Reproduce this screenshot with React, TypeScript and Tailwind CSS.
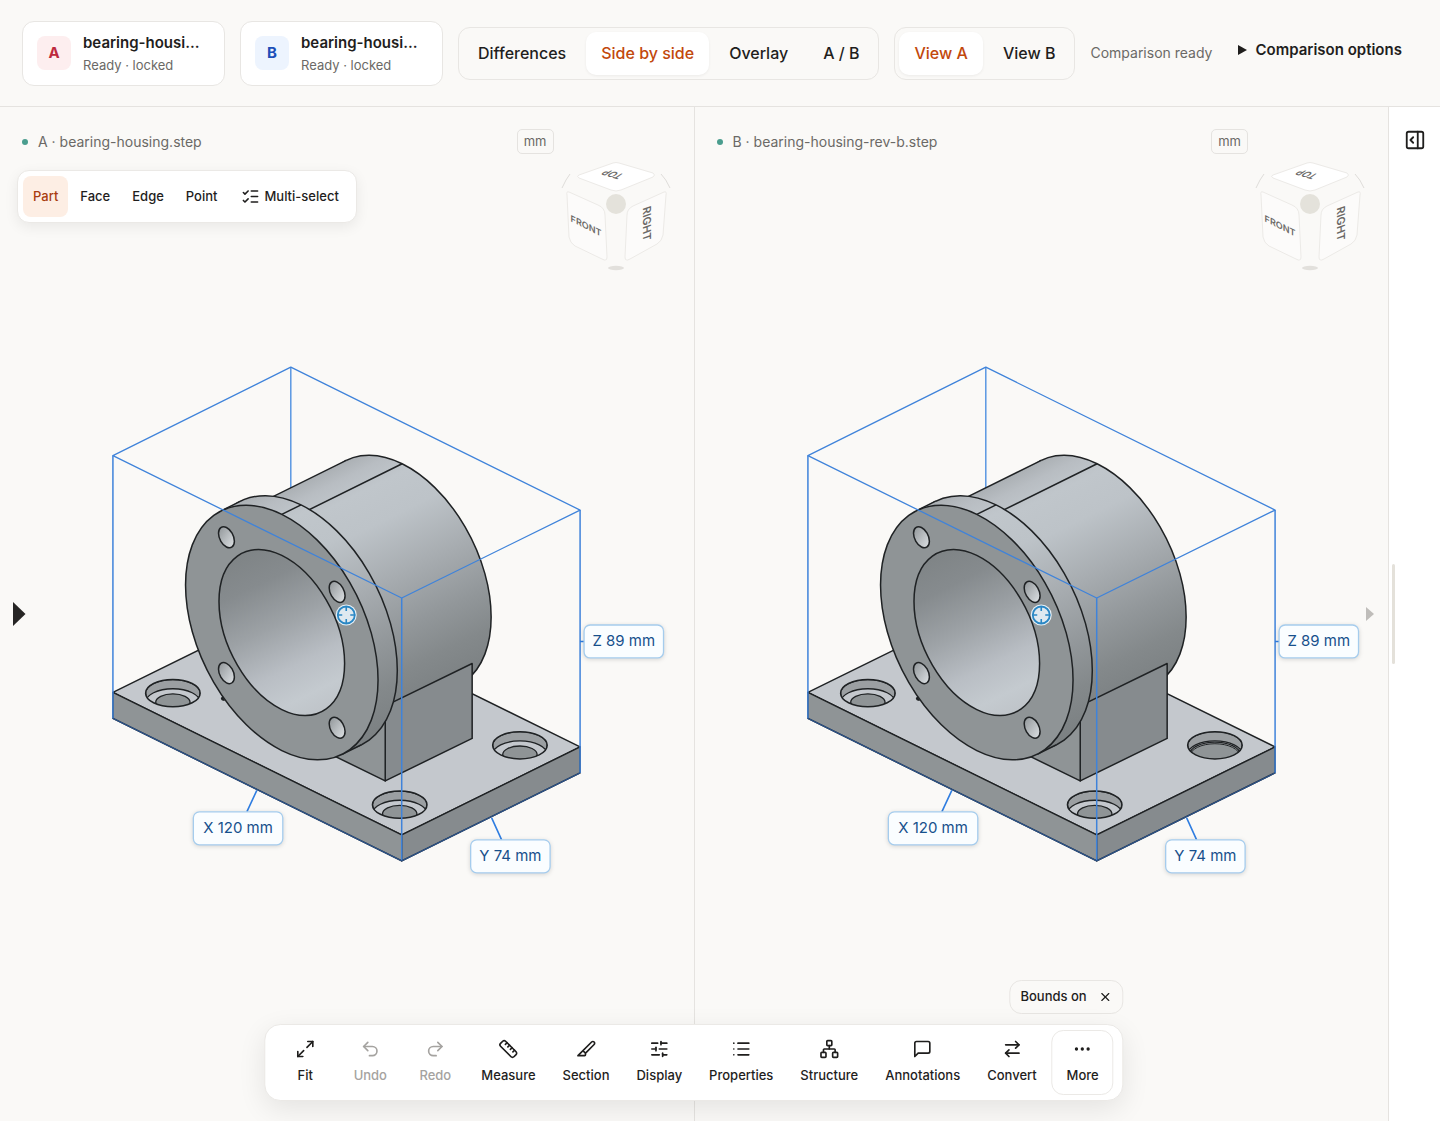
import { useState, type ReactNode } from "react";
import clsx from "clsx";
import {
  ArrowRightLeft,
  Ellipsis,
  List,
  ListChecks,
  Maximize2,
  Network,
  PanelRightOpen,
  Redo2,
  Ruler,
  Slice,
  SlidersHorizontal,
  Undo2,
  X,
} from "lucide-react";

type Side = "A" | "B";

const INK = "#1f2224";

const MODES = ["Differences", "Side by side", "Overlay", "A / B"];
const VIEWS = ["View A", "View B"];
const PICKS = ["Part", "Face", "Edge", "Point"];

const ICON = { size: 20, strokeWidth: 2 };

const TOOLS: { label: string; icon: ReactNode; disabled?: boolean }[] = [
  { label: "Fit", icon: <Maximize2 {...ICON} /> },
  { label: "Undo", icon: <Undo2 {...ICON} />, disabled: true },
  { label: "Redo", icon: <Redo2 {...ICON} />, disabled: true },
  { label: "Measure", icon: <Ruler {...ICON} /> },
  { label: "Section", icon: <Slice {...ICON} /> },
  { label: "Display", icon: <SlidersHorizontal {...ICON} /> },
  { label: "Properties", icon: <List {...ICON} /> },
  { label: "Structure", icon: <Network {...ICON} /> },
  { label: "Annotations", icon: <CommentIcon /> },
  { label: "Convert", icon: <ArrowRightLeft {...ICON} /> },
];

function CommentIcon() {
  return (
    <svg
      width="20"
      height="20"
      viewBox="0 0 24 24"
      fill="none"
      stroke="currentColor"
      strokeWidth="2"
      strokeLinecap="round"
      strokeLinejoin="round"
    >
      <path d="M21 15a2 2 0 0 1-2 2H7l-4 4V5a2 2 0 0 1 2-2h14a2 2 0 0 1 2 2z" />
    </svg>
  );
}

function FileCard({ side, name }: { side: Side; name: string }) {
  return (
    <button className="flex h-[65px] w-[203px] shrink-0 items-center gap-3 rounded-xl border border-[#e8e6e3] bg-white px-3.5 text-left">
      <span
        className={clsx(
          "flex size-[34px] shrink-0 items-center justify-center rounded-lg text-[15px] font-bold",
          side === "A" ? "bg-[#fdeeef] text-[#be2a3e]" : "bg-[#edf4fe] text-[#1d4fb8]",
        )}
      >
        {side}
      </span>
      <span className="pt-0.5">
        <span className="block text-[15px] leading-[22px] font-semibold">{name}</span>
        <span className="block text-[13px] leading-[22px] text-[#6b6966]">Ready · locked</span>
      </span>
    </button>
  );
}

function Segmented({
  options,
  value,
  onChange,
}: {
  options: string[];
  value: string;
  onChange: (v: string) => void;
}) {
  return (
    <div className="flex shrink-0 gap-[5px] rounded-xl border border-[#e8e6e3] p-1">
      {options.map((o) => (
        <button
          key={o}
          onClick={() => onChange(o)}
          className={clsx(
            "h-[43px] rounded-[10px] px-[15px] text-base font-medium whitespace-nowrap",
            o === value && "bg-white text-[#c2480c] shadow-[0_1px_3px_rgba(0,0,0,0.06)]",
          )}
        >
          {o}
        </button>
      ))}
    </div>
  );
}

function ViewCube() {
  return (
    <svg
      className="absolute top-[51px] right-[20px]"
      width="116"
      height="116"
      viewBox="558 158 116 116"
      fill="#fcfbfa"
      stroke="#eceae7"
      fontFamily="Inter, sans-serif"
    >
      <path d="M579 175 L613 163 Q616 162 619 163 L653 173 Q656 175 653 177 L621 190 Q616 192 611 190 L579 178 Q576 176 579 175 Z" fill="#fff" />
      <path d="M567 195 Q566 191 569 192 L598 205 Q605 208 605 215 L607 257 Q607 262 602 259 L575 246 Q570 243 569 237 Z" />
      <path d="M666 195 Q667 191 664 192 L633 206 Q627 209 627 215 L625 257 Q625 262 630 259 L657 244 Q662 241 663 235 Z" />
      <path d="M562 188 Q566 179 570 174 M670 188 Q666 179 661 174" fill="none" stroke="#dfddda" />
      <circle cx="616" cy="204" r="10" fill="#e4e2db" stroke="none" />
      <ellipse cx="616" cy="268" rx="8" ry="2.2" fill="#e2e0dc" stroke="none" />
      <g fill="#6b6967" stroke="none" fontSize="11" fontWeight="600" textAnchor="middle">
        <text transform="translate(586 229) skewY(27)" fontSize="9">
          FRONT
        </text>
        <text transform="translate(643 225) skewY(-20) rotate(90)">RIGHT</text>
        <text transform="translate(616 172) rotate(196) skewX(-40)" fontSize="9">
          TOP
        </text>
      </g>
    </svg>
  );
}

// Counterbored screw hole on the top of the base plate.
function Counterbore({ id, cx, cy, wide }: { id: string; cx: number; cy: number; wide?: boolean }) {
  return (
    <g>
      <clipPath id={id}>
        <ellipse cx={cx} cy={cy} rx="27.3" ry="13.6" />
      </clipPath>
      <g clipPath={`url(#${id})`} stroke={INK} strokeWidth="1.3">
        <ellipse cx={cx} cy={cy} rx="27.3" ry="13.6" fill="#9b9fa2" />
        <ellipse cx={cx} cy={cy + 9.2} rx="27.3" ry="13.6" fill="#c4c8cd" />
        {wide ? (
          <>
            <ellipse cx={cx} cy={cy + 9.6} rx="25.5" ry="12.8" fill="#a9adb0" />
            <ellipse cx={cx} cy={cy + 11} rx="25" ry="12.6" fill="#8f9496" strokeWidth="1" />
          </>
        ) : (
          <ellipse cx={cx} cy={cy + 9.2} rx="17.2" ry="8.5" fill="#8f9496" />
        )}
      </g>
      <ellipse cx={cx} cy={cy} rx="27.3" ry="13.6" fill="none" stroke={INK} strokeWidth="1.5" />
    </g>
  );
}

// Flange-face coordinates, in millimetres: one step along the bore is (1, -0.805),
// and every shade runs at right angles to that step.
const STEP = -0.8046;
const EDGE_X = 0.627;
const EDGE_Y = 0.779;

function Shade({ id, r, stops }: { id: string; r: number; stops: [number, string][] }) {
  return (
    <linearGradient
      id={id}
      gradientUnits="userSpaceOnUse"
      x1={-EDGE_X * r}
      y1={-EDGE_Y * r}
      x2={EDGE_X * r}
      y2={EDGE_Y * r}
    >
      {stops.map(([offset, color]) => (
        <stop key={offset} offset={offset} stopColor={color} />
      ))}
    </linearGradient>
  );
}

function Cylinder({ r, from, to, fill }: { r: number; from: number; to: number; fill: string }) {
  const ex = EDGE_X * r;
  const ey = EDGE_Y * r;
  const y0 = STEP * from;
  const y1 = STEP * to;
  return (
    <>
      <circle cx={to} cy={y1} r={r} fill={fill} vectorEffect="non-scaling-stroke" />
      <path
        d={`M${from - ex} ${y0 - ey} L${to - ex} ${y1 - ey} L${to + ex} ${y1 + ey} L${from + ex} ${y0 + ey} Z`}
        fill={fill}
        stroke="none"
      />
      <path
        d={`M${from - ex} ${y0 - ey} L${to - ex} ${y1 - ey} M${to + ex} ${y1 + ey} L${from + ex} ${y0 + ey} M${from} ${y0 - r} L${to} ${y1 - r}`}
        vectorEffect="non-scaling-stroke"
      />
    </>
  );
}

function FaceGroup({ children }: { children: ReactNode }) {
  return (
    <g
      transform="matrix(2.408 1.188 0 2.955 282 632.5)"
      stroke={INK}
      strokeWidth="1.5"
      className="[&>*]:[vector-effect:non-scaling-stroke]"
    >
      {children}
    </g>
  );
}

function SizeLabel({ x, y, w, children }: { x: number; y: number; w: number; children: string }) {
  return (
    <g>
      <rect
        x={x}
        y={y}
        width={w}
        height="33"
        rx="6"
        fill="#fafdff"
        stroke="#a5cced"
        strokeWidth="1.3"
        className="drop-shadow-sm"
      />
      <text x={x + w / 2} y={y + 21.5} textAnchor="middle" fontSize="15" fill="#17508c">
        {children}
      </text>
    </g>
  );
}

function Housing({ side }: { side: Side }) {
  const id = (n: string) => `${n}-${side}`;
  const metal: [number, string][] = [
    [0, "#abb0b4"],
    [0.06, "#b8bdc2"],
    [0.14, "#c0c6cb"],
    [0.28, "#bdc3c8"],
    [0.5, "#a7acb0"],
    [0.7, "#92979a"],
    [0.85, "#84898b"],
    [1, "#7b8082"],
  ];
  return (
    <svg
      className="absolute inset-0 size-full"
      viewBox="0 107 694 1014"
      fontFamily="Inter, sans-serif"
      strokeLinejoin="round"
    >
      <defs>
        <Shade id={id("body")} r={37} stops={metal} />
        <Shade id={id("rim")} r={40} stops={metal} />
        <Shade
          id={id("bore")}
          r={26.1}
          stops={[
            [0, "#7f8486"],
            [0.2, "#868b8e"],
            [0.45, "#9da2a6"],
            [0.7, "#b9bec4"],
            [0.88, "#c4cacf"],
            [1, "#bfc4c9"],
          ]}
        />
        <linearGradient id={id("bolt")} x1="0" y1="0" x2="1" y2="0.6">
          <stop offset="0.1" stopColor="#92979a" />
          <stop offset="1" stopColor="#d6dadd" />
        </linearGradient>
      </defs>

      <path d="M291 367 V490" stroke="#5a97e2" strokeWidth="1.5" />

      {/* base plate */}
      <g stroke={INK} strokeWidth="1.4">
        <path d="M113 692.5 L291.5 604.5 L580.5 747 L402 835 Z" fill="#c4c8cd" />
        <path d="M113 692.5 L402 835 V861 L113 718.5 Z" fill="#8f9496" />
        <path d="M402 835 L580.5 747 V773 L402 861 Z" fill="#868b8e" />
      </g>
      <Counterbore id={id("hole-left")} cx={173} cy={693.2} />
      <Counterbore id={id("hole-front")} cx={400} cy={804.8} />
      <Counterbore id={id("hole-right")} cx={520.3} cy={745.4} wide={side === "B"} />
      <path d="M221 698 Q221 701 225 701 L223 696 Z" fill={INK} />

      {/* cylinder, then the pedestal that carries it */}
      <FaceGroup>
        <Cylinder r={37} from={8} to={50} fill={`url(#${id("body")})`} />
      </FaceGroup>
      <path d="M385.5 706 L472.5 663.5 V738.5 L385.5 781 Z" fill="#868b8e" stroke={INK} strokeWidth="1.5" />
      <path d="M385.5 706 V781 L320 749 V690 Z" fill="#8f9496" stroke={INK} strokeWidth="1.5" />

      {/* flange */}
      <FaceGroup>
        <Cylinder r={40} from={0} to={8} fill={`url(#${id("rim")})`} />
        <circle r="40" fill="#8f9496" />
        <circle r="26.1" fill={`url(#${id("bore")})`} />
        {[-1, 1].map((sx) =>
          [-1, 1].map((sy) => (
            <circle key={`${sx}${sy}`} cx={sx * 23} cy={sy * 23} r="3.3" fill={`url(#${id("bolt")})`} />
          )),
        )}
      </FaceGroup>

      {/* bounding box */}
      <g fill="none" stroke="#3f83da" strokeWidth="1.3">
        <path d="M113 455.5 L291 367 L580.5 510 L402 598 Z" />
        <path d="M113 455.5 V718.5 M402 598 V861 M580.5 510 V773" strokeWidth="1.5" />
        <path d="M113 718.5 L402 861 L580.5 773" stroke="#2b5288" />
        <path d="M257 790.5 L247 812 M492 818 L502 840 M580.5 641.5 H586" stroke="#2f7de0" strokeWidth="1.6" />
      </g>

      <SizeLabel x={193.5} y={812} w={89.5}>X 120 mm</SizeLabel>
      <SizeLabel x={471} y={840} w={79.5}>Y 74 mm</SizeLabel>
      <SizeLabel x={584.5} y={625} w={79.5}>Z 89 mm</SizeLabel>

      {/* orbit centre */}
      <circle cx="346.5" cy="615" r="10.5" fill="#e9f2f8" />
      <circle cx="346.5" cy="615" r="8.5" fill="#dfe9f0" stroke="#2a87c4" strokeWidth="1.8" />
      <path d="M346.5 606 v5 M346.5 619 v5 M337.5 615 h5 M350.5 615 h5" stroke="#2a87c4" strokeWidth="1.6" />
    </svg>
  );
}

function Pane({ side, file, children }: { side: Side; file: string; children?: ReactNode }) {
  return (
    <section
      className={clsx("relative min-w-0 flex-1", side === "B" && "border-l border-[#e5e3e0]")}
    >
      <Housing side={side} />
      <div className="relative flex items-center pt-[22px] pr-[140px] pl-[22px]">
        <span className="size-1.5 rounded-full bg-[#4a9d8e]" />
        <h2 className="ml-2.5 flex-1 text-sm text-[#6b6966]">
          {side} · {file}
        </h2>
        <span className="flex h-[25px] items-center rounded-[5px] border border-[#e5e3e0] px-1.5 text-[13px] text-[#6b6966]">
          mm
        </span>
      </div>
      <ViewCube />
      {children}
    </section>
  );
}

export default function App() {
  const [mode, setMode] = useState("Side by side");
  const [view, setView] = useState("View A");
  const [pick, setPick] = useState("Part");
  const [bounds, setBounds] = useState(true);

  return (
    <div className="flex min-h-screen flex-col bg-[#faf9f7] font-['Inter',sans-serif] text-[#1f1e1d]">
      <header className="flex h-[107px] items-center gap-[15px] border-b border-[#e5e3e0] px-[22px]">
        <FileCard side="A" name="bearing-housi..." />
        <FileCard side="B" name="bearing-housi..." />
        <Segmented options={MODES} value={mode} onChange={setMode} />
        <Segmented options={VIEWS} value={view} onChange={setView} />
        <span className="text-sm whitespace-nowrap text-[#6b6966]">Comparison ready</span>
        <details className="mb-1.5 ml-2.5">
          <summary className="flex cursor-pointer list-none items-center gap-2 text-[15px] font-semibold whitespace-nowrap">
            <svg width="10" height="10" viewBox="0 0 10 10" fill="currentColor">
              <path d="M1 0 L10 5 L1 10 Z" />
            </svg>
            Comparison options
          </summary>
        </details>
      </header>

      <div className="flex flex-1">
        <main className="relative flex flex-1">
          <Pane side="A" file="bearing-housing.step">
            <div className="relative mt-4 ml-[17px] flex w-fit gap-0.5 rounded-xl border border-[#ebe9e6] bg-white p-[5px] shadow-[0_4px_14px_rgba(0,0,0,0.07)]">
              {PICKS.map((p) => (
                <button
                  key={p}
                  onClick={() => setPick(p)}
                  className={clsx(
                    "h-[41px] rounded-lg px-2.5 text-[13px] font-medium",
                    p === pick && "bg-[#fdeee4] text-[#a83c10]",
                  )}
                >
                  {p}
                </button>
              ))}
              <button className="flex h-[41px] items-center gap-1 rounded-lg px-3 text-[13px] font-medium">
                <ListChecks size={19} />
                Multi-select
              </button>
            </div>
          </Pane>
          <Pane side="B" file="bearing-housing-rev-b.step" />

          <button aria-label="Open left panel" className="absolute top-1/2 left-[13px] -translate-y-1/2">
            <svg width="13" height="24" viewBox="0 0 13 24" fill="#262524">
              <path d="M0 0 L12.500 12 L0 24 Z" />
            </svg>
          </button>
          <button aria-label="Next" className="absolute top-1/2 right-[14px] -translate-y-1/2">
            <svg width="8" height="14" viewBox="0 0 8 14" fill="#bfbdba">
              <path d="M0 0 L8 7 L0 14 Z" />
            </svg>
          </button>

          <div className="absolute bottom-5 left-1/2 flex -translate-x-1/2 flex-col items-end gap-2.5">
            {bounds && (
              <button
                onClick={() => setBounds(false)}
                className="flex h-[34px] items-center gap-3 rounded-xl border border-[#e8e6e3] bg-[#faf9f7] px-2.5 text-[13px] font-medium"
              >
                Bounds on
                <X size={14} />
              </button>
            )}
            <div className="flex gap-[3px] rounded-2xl border border-[#ebe9e6] bg-white px-[9px] py-[5px] shadow-[0_8px_28px_rgba(0,0,0,0.09)]">
              {TOOLS.map((t) => (
                <button
                  key={t.label}
                  disabled={t.disabled}
                  className="flex h-[65px] min-w-[62px] flex-col items-center justify-center gap-[7px] rounded-xl px-3 text-[13px] font-medium disabled:text-[#a5a3a0]"
                >
                  {t.icon}
                  {t.label}
                </button>
              ))}
              <button className="flex h-[65px] min-w-[62px] flex-col items-center justify-center gap-[7px] rounded-xl border border-[#ebe9e6] px-3 text-[13px] font-medium">
                <Ellipsis size={20} />
                More
              </button>
            </div>
          </div>
        </main>

        <aside className="flex w-[52px] shrink-0 flex-col items-center border-l border-[#e5e3e0] bg-white">
          <button aria-label="Open inspector" className="mt-[22px]">
            <PanelRightOpen size={22} />
          </button>
          <span className="mt-[413px] mr-auto ml-[3px] h-[100px] w-[3px] rounded-full bg-[#e4e1da]" />
        </aside>
      </div>
    </div>
  );
}
